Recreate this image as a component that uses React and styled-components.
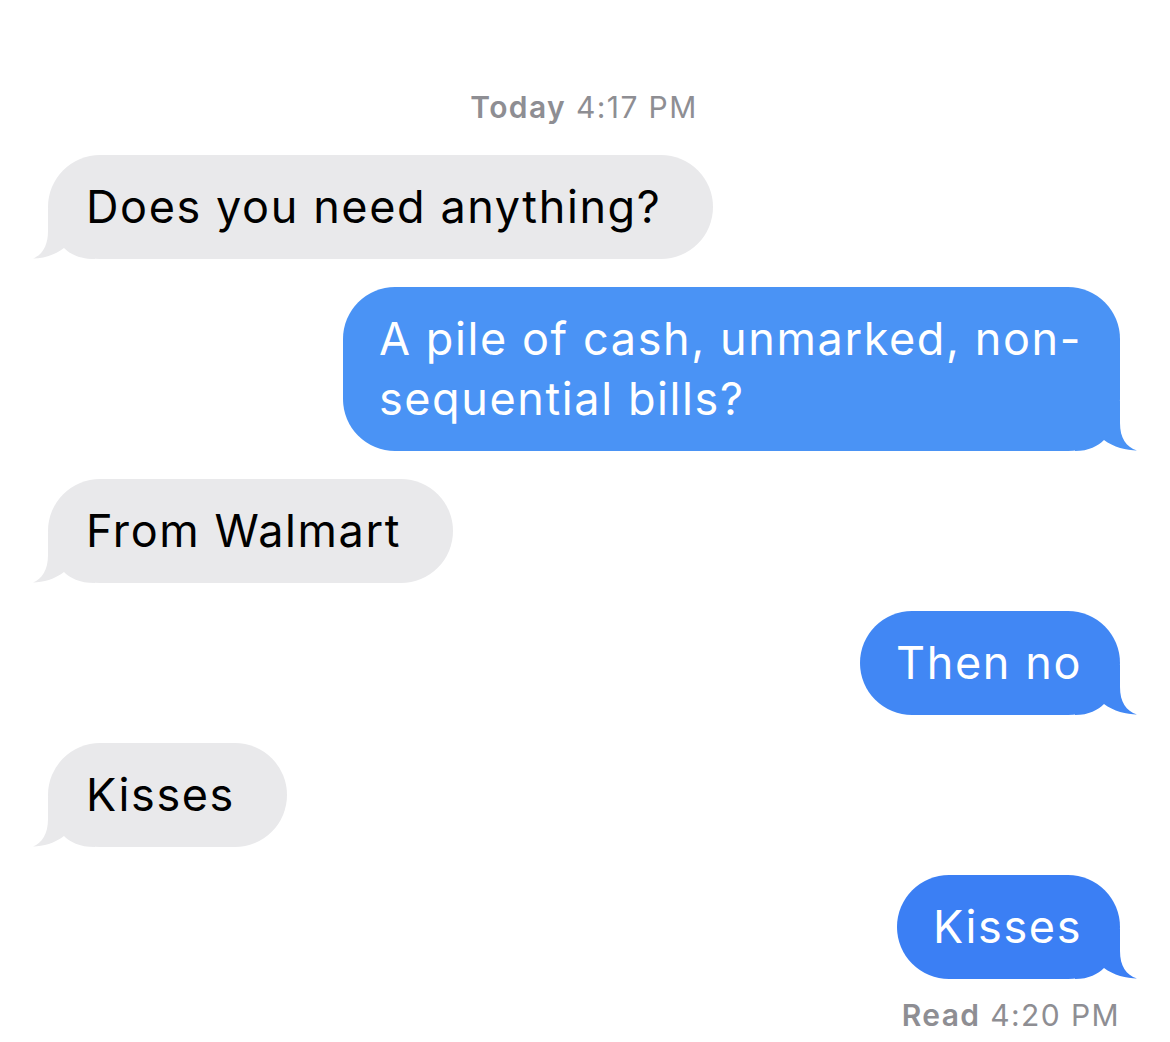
import React from 'react'
import styled, { createGlobalStyle } from 'styled-components'

const GlobalStyle = createGlobalStyle`
  html, body {
    margin: 0;
    padding: 0;
    background: #ffffff;
  }
  body {
    font-family: Inter, "Helvetica Neue", Arial, sans-serif;
    -webkit-font-smoothing: antialiased;
  }
`

const Thread = styled.div`
  width: 1170px;
  box-sizing: border-box;
  padding: 90px 50px 0 48px;
  display: flex;
  flex-direction: column;
  gap: 28px;
`

const Stamp = styled.div`
  text-align: ${(p) => (p.$right ? 'right' : 'center')};
  font-size: 30px;
  line-height: 34px;
  letter-spacing: 1.4px;
  color: #8e8e93;
  margin-bottom: ${(p) => p.$after || 0}px;
  margin-top: ${(p) => p.$before || 0}px;

  b {
    font-weight: 600;
  }
`

const Row = styled.div`
  display: flex;
  justify-content: ${(p) => (p.$me ? 'flex-end' : 'flex-start')};
`

const Bubble = styled.div`
  position: relative;
  box-sizing: border-box;
  padding: 22px ${(p) => (p.$me ? '38px' : '52px')} 22px
    ${(p) => (p.$me ? '36px' : '38px')};
  border-radius: 52px;
  font-size: 45px;
  line-height: 60px;
  letter-spacing: 1.6px;
  white-space: nowrap;
  background: ${(p) => (p.$me ? p.$tone : '#e9e9eb')};
  color: ${(p) => (p.$me ? '#ffffff' : '#000000')};
`

const Text = styled.span`
  position: relative;
`

const Tail = styled.svg`
  position: absolute;
  bottom: 0;
  width: 62px;
  height: 50px;
  ${(p) => (p.$me ? 'right: -17px; transform: scaleX(-1);' : 'left: -15px;')}
`

const BubbleTail = ({ me, color }) => {
  const e = me ? 17 : 15
  return (
    <Tail $me={me} viewBox="0 0 62 50" aria-hidden="true">
      <path
        d={`M${e} 0 L${e} 22 C${e} 37 ${e - 6} 46 0 49.5 C10 49.5 ${e + 7} 46 ${e + 16} 39 C${e + 22} 45 ${e + 31} 50 62 50 L62 0 Z`}
        fill={color}
      />
    </Tail>
  )
}

const Message = ({ me, tone, children }) => (
  <Row $me={me}>
    <Bubble $me={me} $tone={tone}>
      <BubbleTail me={me} color={me ? tone : '#e9e9eb'} />
      <Text>{children}</Text>
    </Bubble>
  </Row>
)

const App = () => (
  <>
    <GlobalStyle />
    <Thread>
      <Stamp $after={3}>
        <b>Today</b> 4:17 PM
      </Stamp>
      <Message>Does you need anything?</Message>
      <Message me tone="#4a93f5">
        A pile of cash, unmarked, non-
        <br />
        sequential bills?
      </Message>
      <Message>From Walmart</Message>
      <Message me tone="#4187f4">Then no</Message>
      <Message>Kisses</Message>
      <Message me tone="#3b7ff4">Kisses</Message>
      <Stamp $right $before={-9}>
        <b>Read</b> 4:20 PM
      </Stamp>
    </Thread>
  </>
)

export default App
